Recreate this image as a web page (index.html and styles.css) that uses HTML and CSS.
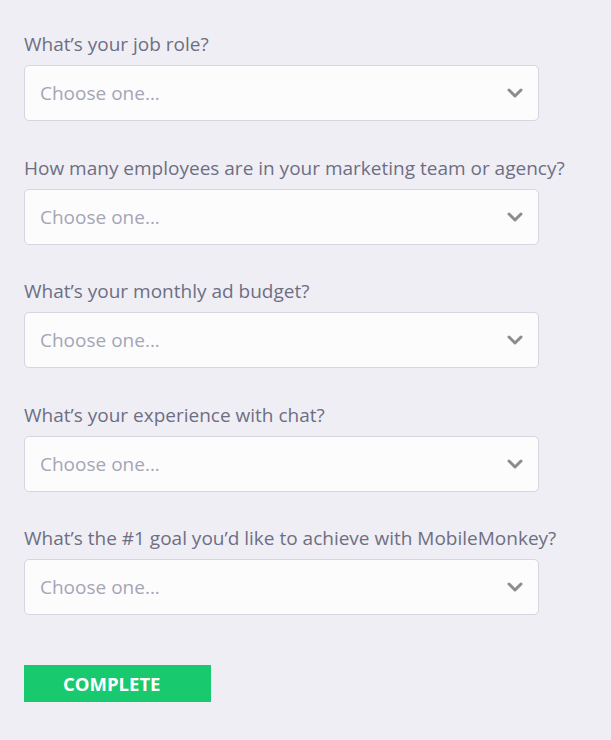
FILE: index.html
```html
<!DOCTYPE html>
<html>
<head>
<meta charset="utf-8">
<link rel="stylesheet" href="styles.css">
</head>
<body>
<form class="survey">
  <div class="field">
    <label class="label">What’s your job role?</label>
    <div class="select"><span class="placeholder">Choose one...</span><svg class="chev" viewBox="0 0 16 10" width="16" height="10"><path d="M2 2 L8 8 L14 2" fill="none" stroke="#8c8c8c" stroke-width="3" stroke-linecap="round" stroke-linejoin="round"/></svg></div>
  </div>
  <div class="field">
    <label class="label">How many employees are in your marketing team or agency?</label>
    <div class="select"><span class="placeholder">Choose one...</span><svg class="chev" viewBox="0 0 16 10" width="16" height="10"><path d="M2 2 L8 8 L14 2" fill="none" stroke="#8c8c8c" stroke-width="3" stroke-linecap="round" stroke-linejoin="round"/></svg></div>
  </div>
  <div class="field">
    <label class="label">What’s your monthly ad budget?</label>
    <div class="select"><span class="placeholder">Choose one...</span><svg class="chev" viewBox="0 0 16 10" width="16" height="10"><path d="M2 2 L8 8 L14 2" fill="none" stroke="#8c8c8c" stroke-width="3" stroke-linecap="round" stroke-linejoin="round"/></svg></div>
  </div>
  <div class="field">
    <label class="label">What’s your experience with chat?</label>
    <div class="select"><span class="placeholder">Choose one...</span><svg class="chev" viewBox="0 0 16 10" width="16" height="10"><path d="M2 2 L8 8 L14 2" fill="none" stroke="#8c8c8c" stroke-width="3" stroke-linecap="round" stroke-linejoin="round"/></svg></div>
  </div>
  <div class="field">
    <label class="label">What’s the #1 goal you’d like to achieve with MobileMonkey?</label>
    <div class="select"><span class="placeholder">Choose one...</span><svg class="chev" viewBox="0 0 16 10" width="16" height="10"><path d="M2 2 L8 8 L14 2" fill="none" stroke="#8c8c8c" stroke-width="3" stroke-linecap="round" stroke-linejoin="round"/></svg></div>
  </div>
  <button type="button" class="complete">COMPLETE</button>
</form>
</body>
</html>
```
FILE: styles.css
```css
html, body {
  margin: 0;
  background: #efeef5;
}
body {
  font-family: "Open Sans", "Noto Sans", sans-serif;
  width: 611px;
  height: 740px;
  overflow: hidden;
}
.survey {
  display: flex;
  flex-direction: column;
  padding: 32px 0 0 24px;
}
.field {
  display: flex;
  flex-direction: column;
  margin-bottom: 34.5px;
}
.label {
  font-size: 19px;
  line-height: 24px;
  color: #6e6e82;
  margin-bottom: 9px;
}
.select {
  box-sizing: border-box;
  width: 515px;
  height: 56px;
  background: #fcfcfd;
  border: 1px solid #d6d6e0;
  border-radius: 5px;
  display: flex;
  align-items: center;
  justify-content: space-between;
  padding: 0 15px 0 15px;
}
.placeholder {
  font-size: 19px;
  color: #a5a5b5;
}
.chev {
  display: block;
}
.complete {
  margin-top: 15.5px;
  width: 187px;
  height: 37px;
  background: #19c96e;
  border: none;
  border-radius: 0;
  color: #ffffff;
  font-family: "Open Sans", "Noto Sans", sans-serif;
  font-weight: 700;
  font-size: 18.5px;
  text-align: left;
  padding: 0 0 0 39px;
}
```
